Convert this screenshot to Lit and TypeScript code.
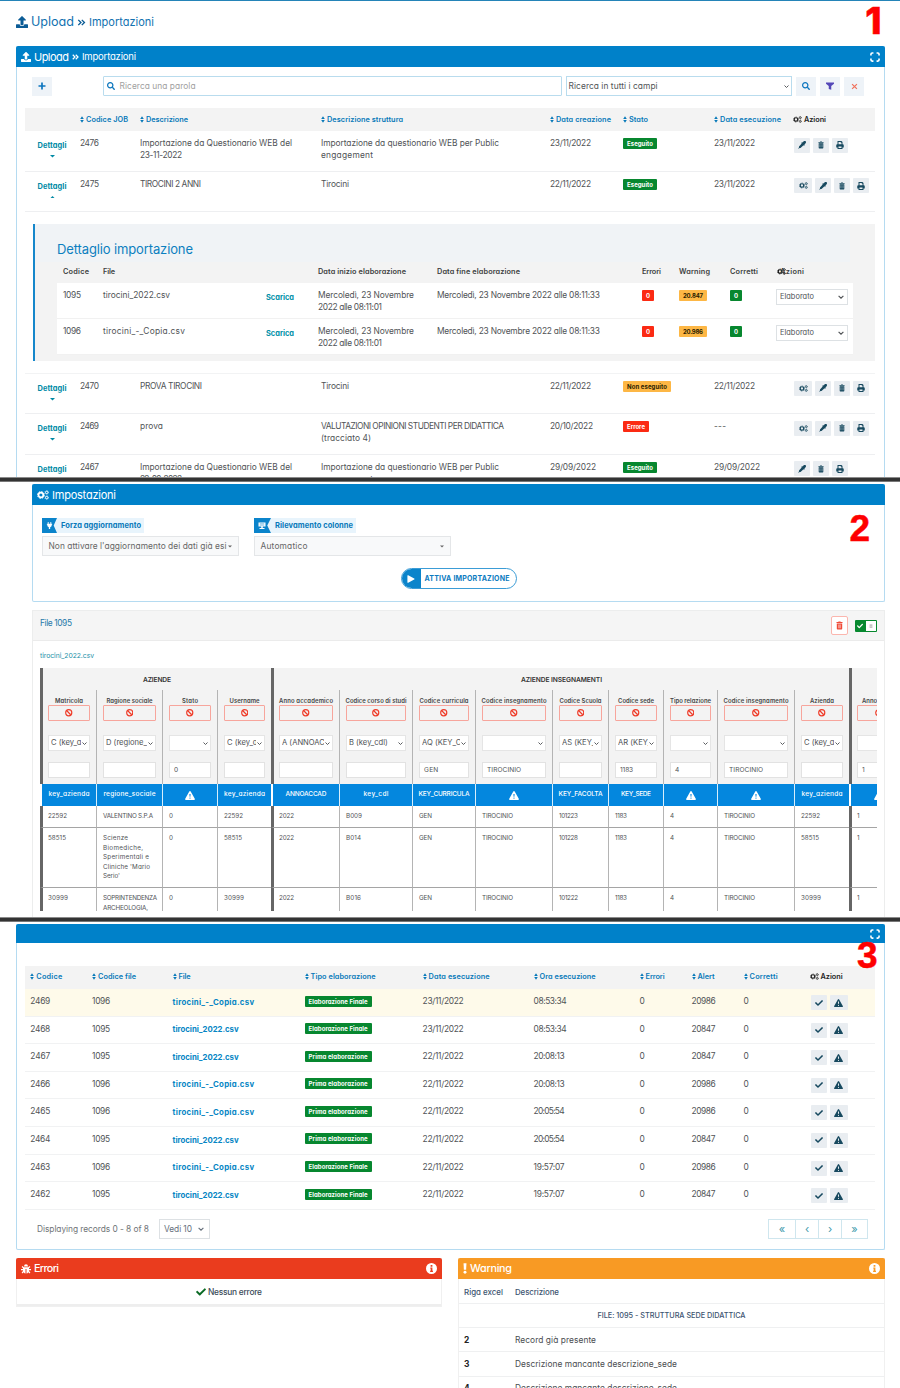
import { LitElement, html, css, svg, nothing } from "lit";
import { customElement, property } from "lit/decorators.js";
import { classMap } from "lit/directives/class-map.js";

/* ---------- icons ---------- */
const ICONS: Record<string, [string, any]> = {
  upload: ["0 0 512 512", svg`<path d="M296 384h-80c-13.300 0-24-10.700-24-24V192h-87.700c-17.800 0-26.700-21.500-14.100-34.100L242.300 5.700c7.500-7.500 19.800-7.500 27.300 0l152.200 152.200c12.600 12.600 3.700 34.100-14.100 34.100H320v168c0 13.300-10.700 24-24 24zm216-8v112c0 13.300-10.700 24-24 24H24c-13.300 0-24-10.700-24-24V376c0-13.300 10.700-24 24-24h136v8c0 30.900 25.100 56 56 56h80c30.900 0 56-25.100 56-56v-8h136c13.300 0 24 10.700 24 24z"/>`],
  search: ["0 0 512 512", svg`<path d="M505 442.700L405.300 343c-4.500-4.500-10.600-7-17-7H372c27.600-35.300 44-79.700 44-128C416 93.100 322.900 0 208 0S0 93.100 0 208s93.100 208 208 208c48.300 0 92.700-16.400 128-44v16.300c0 6.400 2.500 12.500 7 17l99.700 99.700c9.400 9.400 24.600 9.400 33.900 0l28.300-28.300c9.400-9.400 9.400-24.600.1-34zM208 336c-70.700 0-128-57.200-128-128 0-70.700 57.200-128 128-128 70.700 0 128 57.200 128 128 0 70.700-57.200 128-128 128z"/>`],
  check: ["0 0 512 512", svg`<path d="M173.900 439.400l-166.400-166.400c-10-10-10-26.200 0-36.200l36.200-36.200c10-10 26.200-10 36.200 0L192 312.700 432.100 72.600c10-10 26.200-10 36.200 0l36.200 36.200c10 10 10 26.200 0 36.200l-294.400 294.400c-10 10-26.200 10-36.200 0z"/>`],
  plus: ["0 0 16 16", svg`<path d="M6.300 1h3.400v5.300H15v3.400H9.700V15H6.300V9.700H1V6.300h5.300z"/>`],
  filter: ["0 0 16 16", svg`<path d="M0 1h16v2.500l-5.500 4.500v7.500L5.500 14V8L0 3.500z"/>`],
  times: ["0 0 16 16", svg`<path d="M2.500 2.500l11 11M13.500 2.500l-11 11" fill="none" stroke="currentColor" stroke-width="2.800"/>`],
  expand: ["0 0 16 16", svg`<path d="M1.500 5.500v-2q0-2 2-2h2M10.500 1.500h2q2 0 2 2v2M14.500 10.500v2q0 2-2 2h-2M5.500 14.500h-2q-2 0-2-2v-2" fill="none" stroke="currentColor" stroke-width="2.600"/>`],
  cogs: ["0 0 20 16", svg`<g fill="none" stroke="currentColor"><circle cx="6.500" cy="8" r="4" stroke-width="2.800"/><circle cx="6.500" cy="8" r="5.700" stroke-width="1.600" stroke-dasharray="2.500 1.977"/><circle cx="16.200" cy="3.700" r="2" stroke-width="1.600"/><circle cx="16.200" cy="3.700" r="3.100" stroke-width="1" stroke-dasharray="1.600 1.646"/><circle cx="16.200" cy="12.300" r="2" stroke-width="1.600"/><circle cx="16.200" cy="12.300" r="3.100" stroke-width="1" stroke-dasharray="1.600 1.646"/></g>`],
  dropper: ["0 0 16 16", svg`<path d="M15.300.7c1 1 1 2.800 0 3.800L12.800 7l.9 1-1.700 1.700-1-1L5 14.200H3l-1.500 1.300-1-1L2 13v-2l5.400-6-1-1L8 2.300l1 .9L11.500.7c1-1 2.800-1 3.800 0z"/>`],
  trash: ["0 0 14 16", svg`<path fill-rule="evenodd" d="M1 1.200h3.500L5 0h4l.5 1.200H13V3H1zM1.600 3.800h10.800V14.500q0 1.500-1.500 1.500H3.100q-1.500 0-1.500-1.500zM4 6v7.500h.8V6zM6.600 6v7.500h.8V6zM9.200 6v7.500h.8V6z"/>`],
  print: ["0 0 16 16", svg`<path fill-rule="evenodd" d="M3 0h8l2 2v4.500h.5q2 0 2 2V13H13v3H3v-3H.500V8.500q0-2 2-2H3zM5 2v4.500h6V3.500H9.500V2zM5 11v3h6v-3z"/>`],
  ban: ["0 0 16 16", svg`<circle cx="8" cy="8" r="6.500" fill="none" stroke="currentColor" stroke-width="2.500"/><path d="M3.800 3.800l8.400 8.400" stroke="currentColor" stroke-width="2.500"/>`],
  warn: ["0 0 18 16", svg`<path fill-rule="evenodd" d="M9 0q.8 0 1.300.8l7.300 13q.7 2.200-1.200 2.200H1.600Q-.3 16 .4 13.800L7.700.8Q8.200 0 9 0zM7.900 5.200l.4 5h1.400l.4-5zM9 11.400a1.200 1.200 0 100 2.400 1.200 1.200 0 000-2.400z"/>`],
  sort: ["0 0 8 14", svg`<path d="M4 0.500l3.600 5.300H.4zM4 13.500L.4 8.200h7.200z"/>`],
  chevron: ["0 0 10 6", svg`<path d="M1 1l4 4 4-4" fill="none" stroke="currentColor" stroke-width="1.900"/>`],
  down: ["0 0 8 4", svg`<path d="M0 0h8L4 4z"/>`],
  up: ["0 0 8 4", svg`<path d="M0 4h8L4 0z"/>`],
  plug: ["0 0 16 16", svg`<path d="M4 0h2v4h4V0h2v4h2v2.500h-1V8q0 3-3.500 4v4h-3v-4Q3 11 3 8V6.500H2V4h2z"/>`],
  sign: ["0 0 16 16", svg`<path d="M1 1h14v8H1zM6.500 9h3v3H13v2H3v-2h3.500z"/><path d="M3.500 3.500h9M3.500 6.200h9" stroke="#0b84cb" stroke-width="1"/>`],
  play: ["0 0 10 10", svg`<path d="M.5 1q0-1.200 1-.6l7.500 4q.9.600 0 1.200l-7.500 4q-1 .6-1-.6z"/>`],
  bug: ["0 0 16 16", svg`<path fill-rule="evenodd" d="M4.700 3.800Q5 .2 8 .2t3.300 3.600zM0 8h3.200V6.600L1 4.600l1.300-1.300L4.600 5h6.800l2.300-1.700L15 4.600l-2.200 2V8H16v2h-3.200v1.300l2.200 2.400-1.300 1.300-2-2q-1.100 2-2.900 2.300V8H7.200v7.300Q5.300 15 4.300 13l-2 2L1 13.700l2.200-2.400V10H0z"/>`],
  info: ["0 0 16 16", svg`<path fill-rule="evenodd" d="M8 0a8 8 0 100 16A8 8 0 008 0zM6.700 2.800h2.600v2.500H6.700zM6.300 6.600h3v4.800h.8V13H6v-1.600h.8V8.200h-.5z"/>`],
  bang: ["0 0 6 16", svg`<path d="M.8 0h4.400l-.5 10H1.300z"/><circle cx="3" cy="13.600" r="2.200"/>`],
  angles: ["0 0 14 12", svg`<path d="M1.500 1.500L6 6l-4.500 4.500M7.500 1.500L12 6l-4.500 4.500" fill="none" stroke="currentColor" stroke-width="2.400"/>`],
};
const icon = (name: string, w = 8, h = w) => svg`<svg class="ic" width=${w} height=${h} viewBox=${ICONS[name][0]} fill="currentColor">${ICONS[name][1]}</svg>`;

/* A single line of text whose tracking is computed so that it spans w pixels. */
@customElement("fit-text")
class FitText extends LitElement {
  @property({ type: Number }) w = 0;
  static styles = css`
    :host { display: inline-block; white-space: pre; }
    span { display: inline-block; }
  `;
  render() { return html`<span><slot></slot></span>`; }
  firstUpdated() {
    const s = this.renderRoot.querySelector("span") as HTMLElement;
    const n = (this.textContent || "").length;
    if (!this.w || n < 2) return;
    const natural = s.getBoundingClientRect().width;
    s.style.letterSpacing = `${(this.w - natural) / (n - 1)}px`;
    s.style.marginRight = `${-(this.w - natural) / (n - 1)}px`;
  }
}
const fit = (t: string, w = 0) => html`<fit-text .w=${w}>${t}</fit-text>`;
const lines = (l: [string, number][]) => l.map(([t, w]) => html`<div>${fit(t, w)}</div>`);

/* ---------- data ---------- */
type L = [string, number][];
interface Job { code: string; open?: boolean; desc: L; org: L; made: string; state: [string, string, number]; run: string; cogs: boolean }
const WEB = (d: string): L => [["Importazione da Questionario WEB del", 152], [d, 42]];
const PUB: L = [["Importazione da questionario WEB per Public", 178], ["engagement", 52]];
const JOBS: Job[] = [
  { code: "2476", desc: WEB("23-11-2022"), org: PUB, made: "23/11/2022", state: ["Eseguito", "ok", 26], run: "23/11/2022", cogs: false },
  { code: "2475", open: true, desc: [["TIROCINI 2 ANNI", 61]], org: [["Tirocini", 28]], made: "22/11/2022", state: ["Eseguito", "ok", 26], run: "23/11/2022", cogs: true },
  { code: "2470", desc: [["PROVA TIROCINI", 62]], org: [["Tirocini", 28]], made: "22/11/2022", state: ["Non eseguito", "mid", 40], run: "22/11/2022", cogs: true },
  { code: "2469", desc: [["prova", 23]], org: [["VALUTAZIONI OPINIONI STUDENTI PER DIDATTICA", 183], ["(tracciato 4)", 50]], made: "20/10/2022", state: ["Errore", "bad", 18], run: "---", cogs: true },
  { code: "2467", desc: WEB("22-09-2022"), org: PUB, made: "29/09/2022", state: ["Eseguito", "ok", 26], run: "29/09/2022", cogs: false },
];
const dateW = (d: string) => (d === "---" ? 12 : d.startsWith("29") ? 46 : d.startsWith("20") ? 43 : 41);

interface Col { x: number; thick?: boolean; label: string; lw: number; sel: string; val: string; key: string; kw: number; d: string[] }
const col = (x: number, label: string, lw: number, sel: string, val: string, key: string, kw: number, d: string[], thick = false): Col => ({ x, label, lw, sel, val, key, kw, d, thick });
const COLS: Col[] = [
  col(40, "Matricola", 28, "C (key_azienda)", "", "key_azienda", 41, ["22592", "58515", "30999"], true),
  col(96, "Ragione sociale", 46, "D (regione_sociale)", "", "regione_sociale", 52, ["VALENTINO S.P.A", "Scienze|Biomediche,|Sperimentali e|Cliniche 'Mario|Serio'", "SOPRINTENDENZA|ARCHEOLOGIA,"]),
  col(162, "Stato", 16, " ", "0", "", 0, ["0", "0", "0"]),
  col(217, "Username", 30, "C (key_azienda)", "", "key_azienda", 41, ["22592", "58515", "30999"]),
  col(271, "Anno accademico", 54, "A (ANNOACCAD)", "", "ANNOACCAD", 41, ["2022", "2022", "2022"], true),
  col(339, "Codice corso di studi", 61, "B (key_cdl)", "", "key_cdl", 25, ["B009", "B014", "B016"]),
  col(412, "Codice curricula", 49, "AQ (KEY_CURRICULA)", "GEN", "KEY_CURRICULA", 51, ["GEN", "GEN", "GEN"]),
  col(475, "Codice insegnamento", 65, " ", "TIROCINIO", "", 0, ["TIROCINIO", "TIROCINIO", "TIROCINIO"]),
  col(552, "Codice Scuola", 42, "AS (KEY_FACOLTA)", "", "KEY_FACOLTA", 44, ["101223", "101228", "101222"]),
  col(608, "Codice sede", 36, "AR (KEY_SEDE)", "1183", "KEY_SEDE", 30, ["1183", "1183", "1183"]),
  col(663, "Tipo relazione", 41, " ", "4", "", 0, ["4", "4", "4"]),
  col(717, "Codice insegnamento", 65, " ", "TIROCINIO", "", 0, ["TIROCINIO", "TIROCINIO", "TIROCINIO"]),
  col(794, "Azienda", 24, "C (key_azienda)", "", "key_azienda", 41, ["22592", "58515", "30999"]),
  col(849, "Anno corso", 33, " ", "1", "", 0, ["1", "1", "1"], true),
];
const COL_END = 906;
const dataW: Record<string, number> = { "VALENTINO S.P.A": 50, "Scienze": 25, "Biomediche,": 40, "Sperimentali e": 46, "Cliniche 'Mario": 47, "Serio'": 17, "SOPRINTENDENZA": 54, "ARCHEOLOGIA,": 45, "22592": 19, "58515": 18, "30999": 20, "2022": 15, "B009": 16, "B014": 15, "B016": 15, GEN: 13, TIROCINIO: 31, "101223": 19, "101228": 19, "101222": 19, "1183": 12 };

const COPIA: [string, number] = ["tirocini_-_Copia.csv", 81.500];
const PLAIN: [string, number] = ["tirocini_2022.csv", 66];
const RUNS: [string, string, [string, number], string, string, string, string][] = [
  ["2469", "1096", COPIA, "Elaborazione Finale", "23/11/2022", "08:53:34", "20986"],
  ["2468", "1095", PLAIN, "Elaborazione Finale", "23/11/2022", "08:53:34", "20847"],
  ["2467", "1095", PLAIN, "Prima elaborazione", "22/11/2022", "20:08:13", "20847"],
  ["2466", "1096", COPIA, "Prima elaborazione", "22/11/2022", "20:08:13", "20986"],
  ["2465", "1096", COPIA, "Prima elaborazione", "22/11/2022", "20:05:54", "20986"],
  ["2464", "1095", PLAIN, "Prima elaborazione", "22/11/2022", "20:05:54", "20847"],
  ["2463", "1096", COPIA, "Elaborazione Finale", "22/11/2022", "19:57:07", "20986"],
  ["2462", "1095", PLAIN, "Elaborazione Finale", "22/11/2022", "19:57:07", "20847"],
];

const th = (t: string, w: number) => html`<div class="th">${icon("sort", 4, 7)}${fit(t, w)}</div>`;

@customElement("app-root")
class AppRoot extends LitElement {
  static styles = css`
    :host { display: block; width: 900px; height: 1388px; overflow: hidden; background: #fff;
      font: 400 8.400px/12px Inter, "Noto Sans", sans-serif; font-feature-settings: "cv11"; color: #505356; }
    * { box-sizing: border-box; }
    .ic { display: block; flex: none; }
    .sec { position: relative; overflow: hidden; }
    .s1 { height: 477px; border-top: 1px solid #2484b8; }
    .s2 { height: 435px; padding: 2px 15px 0 32px; }
    .s3 { height: 466px; padding: 2px 15px 0 16px; }
    .rule { height: 5px; background: #333; border-top: 1px solid #8b8b8b; border-bottom: 1px solid #777; }
    .num { position: absolute; font: 700 37px/37px "Liberation Sans", Arial, sans-serif; color: #fe0000; -webkit-text-stroke: .5px #fe0000; }
    .n1 { right: 18.500px; top: 1px; font-family: Inter, sans-serif; font-weight: 800; }
    .n2 { right: 30px; top: 28px; }
    .n3 { right: 22.500px; top: 15px; }

    .crumb { display: flex; align-items: center; gap: 3px; height: 20px; margin: 11px 0 0 16px; color: #1272b0; font-size: 12.600px; }
    .crumb .sub { font-size: 11px; }
    .crumb .ic { color: #0b5c96; }
    .panel { border: 1px solid #b5dbf1; border-top: 0; border-radius: 2px; background: #fff; }
    .s1 .panel { margin: 14px 15px 0 16px; height: 500px; }
    .bar { display: flex; align-items: center; gap: 3px; height: 21px; margin: 0 -1px; padding: 0 5px; background: #0081c9; color: #fff; font-size: 11px; border-radius: 2px 2px 0 0; }
    .bar .sub { font-size: 9.500px; }
    .bar .end { margin-left: auto; }
    .tools { display: flex; align-items: center; height: 20px; margin: 9px 20px 0 15px; gap: 4px; }
    .tb { display: grid; place-items: center; width: 20px; height: 19px; background: #eef3f8; color: #0d76bf; }
    .tb.f { color: #5448b8; } .tb.x { color: #f0725d; }
    .search { display: flex; align-items: center; gap: 5px; width: 460px; height: 20px; margin-left: 46.600px; padding-left: 3px; border: 1px solid #b9dcee; color: #a0a0a0; border-radius: 1px; }
    .search .ic { color: #0b76bd; }
    .sel { display: flex; align-items: center; justify-content: space-between; border: 1px solid #dde1e4; background: #fff; white-space: nowrap; overflow: hidden; }
    .tools .sel { width: 227px; height: 20px; border-color: #b9dcee; padding: 0 2px; }
    .row { display: grid; grid-template-columns: 55px 60px 181px 229px 73px 91px 79px 1fr; margin: 0 9px 0 8px; height: 40.500px; border-bottom: 1px solid #eeeff1; padding-top: 6px; }
    .row.head { height: 23px; margin-top: 12px; align-items: center; padding: 0; border: 0; background: #f3f3f3; }
    .th { display: flex; align-items: center; gap: 2px; color: #0779b9; font-weight: 600; font-size: 7.300px; }
    .th.k { color: #222; }
    .row.top { border-top: 1px solid #f2f3f4; height: 41px; margin-top: 12px; }
    .det { display: flex; flex-direction: column; align-items: center; gap: 3px; width: 30px; margin-left: 12px; padding-top: 3px; color: #008aa5; font-weight: 700; font-size: 7.400px; }
    .badge { display: inline-flex; align-items: center; justify-content: center; height: 11px; padding: 0 4px; font-size: 6px; line-height: 9px; font-weight: 700; color: #fff; border-radius: 1px; vertical-align: top; }
    .row .badge { margin-top: 1px; }
    .ok { background: #07872f; } .mid { background: #fdb745; color: #2b1d00; } .bad { background: #fb2a13; }
    .acts { display: flex; gap: 3px; margin: .5px 0 0 1px; }
    .ab { display: grid; place-items: center; width: 16px; height: 15px; background: #e9edf1; color: #17495f; border-radius: 1px; }
    .ab.w { width: 18px; }

    .detail { margin: 12px 9px 0 16px; height: 137px; background: linear-gradient(90deg, #f0f3f6 0 97%, #f3f3f3 97%) top / 100% 38px no-repeat #f3f3f3; border-left: 2px solid #1687cb; padding: 17px 22px 0 22px; }
    .detail h2 { margin: 0; font: 400 13px/16px Inter, sans-serif; color: #0c7fc0; }
    .dr { display: grid; grid-template-columns: 40px 163px 52px 119px 205px 37px 51px 47px 1fr; padding: 6px 0 0 6px; height: 36px; background: #fff; border-bottom: 1px solid #f1f1f1; }
    .dr.h { height: 26px; padding-top: 8.600px; background: none; border: 0; font-size: 7.300px; font-weight: 600; color: #3b3e40; }
    .dr .sel { width: 72px; height: 16px; padding: 0 3px; font-size: 7.400px; margin-left: -1px; }
    .dr.h .az { display: flex; align-items: center; height: 12px; }
    .dr.h .az .ic { margin-right: -6px; color: #111; }
    .dr .badge { margin-top: 1px; }
    .scar { color: #0090a8; font-weight: 700; font-size: 7.400px; padding-top: 2.500px; }

    .s2 .panel { height: 118px; }
    .opts { display: flex; gap: 15px; padding: 13px 0 0 9px; }
    .opt { width: 197px; }
    .tag { display: flex; width: max-content; height: 15px; align-items: center; background: #e8f4fc; color: #0879ba; font-weight: 700; font-size: 7.500px; padding-right: 3px; }
    .tag i { display: grid; place-items: center start; padding-left: 4px; width: 15px; height: 15px; margin-right: 4px; background: #0b84cb; color: #fff; clip-path: polygon(0 0, 100% 0, 78% 50%, 100% 100%, 0 100%); }
    .tag i.wd { width: 17px; }
    .opt .sel { height: 20px; margin-top: 3px; padding: 0 6px 0 5.500px; background: #f8f9fa; border-color: #e4e6e8; color: #666; }
    .go { display: flex; align-items: center; width: 116px; height: 21px; margin: 12px 0 0 367.500px; border: 1px solid #3b9cd6; border-radius: 11px; overflow: hidden; color: #0b7bc0; font-weight: 700; font-size: 7px; }
    .go i { display: grid; place-items: center; width: 19px; height: 21px; margin-right: 4px; background: #0b84cb; color: #fff; }
    .file { height: 320px; margin-top: 8px; border: 1px solid #eceded; }
    .fh { display: flex; align-items: center; height: 30px; padding: 0 7px; background: #f5f5f5; border-bottom: 1px solid #ebebeb; color: #2579a9; }
    .fh > fit-text { padding-bottom: 6px; }
    .fh .del { display: grid; place-items: center; width: 17px; height: 19px; margin-left: auto; border: 1px solid #fbb6ae; background: #fff; color: #f04a37; border-radius: 2px; }
    .sw { display: flex; align-items: center; width: 22px; height: 12px; margin-left: 7px; padding: 1px 1px 1px 2px; background: #07892f; color: #fff; gap: 1px; border-radius: 1px; }
    .sw b { display: grid; place-items: center; width: 10px; height: 10px; background: #fff; color: #bbb; margin-left: auto; }
    .fn { height: 12px; margin: 9px 0 6px 7px; color: #1a8fa8; font-size: 6.800px; }
    .scroll { width: 837px; height: 243px; margin-left: 7px; overflow: hidden; font-size: 6.300px; line-height: 9.600px; }
    .grid { display: grid; width: 866px; }
    .g { background: #f3f3f3; height: 22px; text-align: center; line-height: 24px; font-weight: 600; font-size: 6.700px; color: #333; }
    .c { border-left: 1px solid #b4b4b4; padding: 0 6px; min-width: 0; }
    .thick { border-left: 3px solid #666; }
    .c.thick { padding-left: 5px; }
    .c.f { height: 94px; background: #f3f3f3; padding-top: 6px; }
    .lab { height: 9px; display: flex; justify-content: center; font-weight: 600; font-size: 5.900px; color: #444; white-space: nowrap; }
    .ban { display: grid; place-items: center; height: 16px; border: 1px solid #f7a59c; color: #ef3b28; border-radius: 1px; }
    .c .sel { height: 16px; margin-top: 14px; padding: 0 2px; font-size: 7.600px; border-color: #e5e5e5; gap: 1px; }
    .c .sel span { overflow: hidden; flex: 1; min-width: 0; }
    .inp { height: 16px; margin-top: 11px; border: 1px solid #e2e2e2; background: #fff; padding: 2.500px 4px; font-size: 6.600px; }
    .c.k { display: grid; place-items: center; height: 22px; padding: 0; background: #0487de; border-color: #d7eefc; border-left-width: 1px; color: #fff; font-weight: 500; font-size: 6.500px; }
    .c.k.thick { border-left: 2px solid #fff; margin-left: 0; }
    .c.d { border-bottom: 1px solid #a5a5a5; padding-top: 6px; }
    .d0 { height: 22px; } .d1 { height: 60px; } .d2 { height: 40px; }

    .s3 .panel { height: 326px; }
    .s3 .panel .bar { height: 19px; }
    .rr { display: grid; grid-template-columns: 61.800px 80.500px 132px 118px 111px 106px 52px 52px 66px 1fr; margin: 0 9px 0 8px; padding: 6px 0 0 5.300px; height: 27.600px; border-bottom: 1px solid #f1f2f3; }
    .rr.head { height: 23px; margin-top: 23px; padding-top: 0; align-items: center; background: #f3f3f3; border: 0; }
    .rr.head .th { margin-top: -1.500px; }
    .rr.hl { background: #fefaea; }
    .rr .acts { margin: 0 0 0 1px; }
    .rr .badge { margin-top: .5px; width: 67px; padding: 0; }
    .link { color: #0585c4; font-weight: 700; font-size: 7.800px; padding-top: .7px; }
    .foot { display: flex; align-items: center; height: 20px; margin: 9px 16px 0 20px; color: #707477; }
    .foot .sel { width: 51px; height: 20px; margin-left: 10px; padding: 0 5px 0 4px; color: #66707c; }
    .pager { display: flex; margin-left: auto; border: 1px solid #cfe6ee; height: 20px; color: #3f9bac; }
    .pager span { display: grid; place-items: center; width: 23px; border-left: 1px solid #cfe6ee; font-size: 11px; line-height: 18px; padding-bottom: 2px; }
    .pager span:first-child { border: 0; } .pager .wd { width: 26px; }
    .cards { display: flex; align-items: flex-start; gap: 16px; margin-top: 8px; }
    .card { width: 426px; border: 1px solid #f0f0f0; border-top: 0; }
    .card.w { width: 427px; }
    .card .bar { font-size: 10.800px; font-weight: 500; }
    .bar.red { background: #ea3c1e; } .bar.or { background: #f89a24; }
    .none { display: flex; justify-content: center; align-items: center; gap: 2px; height: 27px; font-weight: 500; color: #3a4a58; border-bottom: 2px solid #eee; }
    .none .ic { color: #0a6a24; }
    .wr { display: grid; grid-template-columns: 51px 1fr; align-items: center; height: 24.200px; border-bottom: 1px solid #eff0f1; padding-left: 5px; color: #4a4d50; }
    .wr.h { font-size: 7.900px; font-weight: 500; color: #3c5470; height: 25px; padding-top: 1px; }
    .wr.one { display: flex; justify-content: center; font-size: 7.300px; font-weight: 500; color: #3c5470; padding: 0; }
    .wr b { color: #222; }
  `;

  private job(j: Job, top = false) {
    return html`<div class=${classMap({ row: true, top })}>
      <div class="det">${fit("Dettagli", 29)}${icon(j.open ? "up" : "down", 5, 2.5)}</div>
      <div>${fit(j.code, 19)}</div>
      <div>${lines(j.desc)}</div><div>${lines(j.org)}</div>
      <div>${fit(j.made, dateW(j.made))}</div>
      <div><span class="badge ${j.state[1]}">${fit(j.state[0], j.state[2])}</span></div>
      <div>${fit(j.run, dateW(j.run))}</div>
      <div class="acts">${j.cogs ? html`<span class="ab w">${icon("cogs", 9, 7)}</span>` : nothing}
        <span class="ab">${icon("dropper", 8)}</span><span class="ab">${icon("trash", 6, 8)}</span><span class="ab">${icon("print", 8)}</span></div>
    </div>`;
  }

  private detailRow(code: string, file: string, fw: number, warn: string) {
    return html`<div class="dr"><div>${fit(code, 18)}</div><div>${fit(file, fw)}</div><div class="scar">${fit("Scarica", 28)}</div>
      <div>${lines([["Mercoledì, 23 Novembre", 96], ["2022 alle 08:11:01", 64]])}</div>
      <div>${fit("Mercoledì, 23 Novembre 2022 alle 08:11:33", 163)}</div>
      <div><span class="badge bad">0</span></div><div><span class="badge mid">${fit(warn, 20)}</span></div><div><span class="badge ok">0</span></div>
      <div><div class="sel">${fit("Elaborato", 34)}${icon("chevron", 6, 4)}</div></div></div>`;
  }

  private sheet() {
    const tracks = COLS.map((c, i) => (i + 1 < COLS.length ? COLS[i + 1].x : COL_END) - c.x + "px").join(" ");
    const cls = (c: Col, k: string) => `c ${k} ${c.thick ? "thick" : ""}`;
    return html`<div class="scroll"><div class="grid" style="grid-template-columns:${tracks}">
      <div class="g thick" style="grid-column:span 4">${fit("AZIENDE", 28)}</div>
      <div class="g thick" style="grid-column:span 9">${fit("AZIENDE INSEGNAMENTI", 81)}</div>
      <div class="g thick"></div>
      ${COLS.map(c => html`<div class=${cls(c, "f")}><div class="lab">${fit(c.label, c.lw)}</div>
        <div class="ban">${icon("ban", 7.5)}</div>
        <div class="sel"><span>${c.sel}</span>${icon("chevron", 5, 3)}</div>
        <div class="inp">${fit(c.val, dataW[c.val] ? dataW[c.val] * 1.1 : 0)}</div></div>`)}
      ${COLS.map(c => html`<div class=${cls(c, "k")}>${c.key ? fit(c.key, c.kw) : icon("warn", 10, 9)}</div>`)}
      ${[0, 1, 2].map(r => COLS.map(c => html`<div class=${cls(c, "d d" + r)}>${lines(c.d[r].split("|").map(t => [t, dataW[t] || 0] as [string, number]))}</div>`))}
    </div></div>`;
  }

  render() {
    return html`
      <section class="sec s1">
        <div class="crumb">${icon("upload", 12)}${fit("Upload", 43)}${icon("angles", 9, 7)}<span class="sub">${fit("Importazioni", 65)}</span></div>
        <div class="panel">
          <div class="bar">${icon("upload", 10)}${fit("Upload", 35)}${icon("angles", 7, 6)}<span class="sub">${fit("Importazioni", 54)}</span><span class="end">${icon("expand", 10)}</span></div>
          <div class="tools"><span class="tb">${icon("plus", 8)}</span>
            <div class="search">${icon("search", 8)}${fit("Ricerca una parola", 76)}</div>
            <div class="sel">${fit("Ricerca in tutti i campi", 89)}${icon("chevron", 5, 3)}</div>
            <span class="tb">${icon("search", 8)}</span><span class="tb f">${icon("filter", 8)}</span><span class="tb x">${icon("times", 7)}</span></div>
          <div class="row head"><div></div>${th("Codice JOB", 42)}${th("Descrizione", 42)}${th("Descrizione struttura", 76)}${th("Data creazione", 55)}${th("Stato", 19)}${th("Data esecuzione", 61)}<div class="th k">${icon("cogs", 9, 7)}${fit("Azioni", 22)}</div></div>
          ${JOBS.slice(0, 2).map(j => this.job(j))}
          <div class="detail"><h2>${fit("Dettaglio importazione", 136)}</h2>
            <div class="dr h"><div>${fit("Codice", 26)}</div><div>${fit("File", 12)}</div><div></div><div>${fit("Data inizio elaborazione", 88)}</div><div>${fit("Data fine elaborazione", 83)}</div><div>${fit("Errori", 19)}</div><div>${fit("Warning", 31)}</div><div>${fit("Corretti", 28)}</div><div class="az">${icon("cogs", 9, 7)}${fit("Azioni", 24)}</div></div>
            ${this.detailRow("1095", "tirocini_2022.csv", 67, "20.847")}${this.detailRow("1096", "tirocini_-_Copia.csv", 82, "20.986")}
          </div>
          ${JOBS.slice(2).map((j, i) => this.job(j, i === 0))}
        </div>
        <div class="num n1">1</div>
      </section>
      <div class="rule"></div>
      <section class="sec s2">
        <div class="panel">
          <div class="bar">${icon("cogs", 12, 10)}${fit("Impostazioni", 64)}</div>
          <div class="opts">
            <div class="opt"><div class="tag"><i>${icon("plug", 7)}</i>${fit("Forza aggiornamento", 80)}</div><div class="sel">${fit("Non attivare l'aggiornamento dei dati già esi", 178)}${icon("down", 4, 3)}</div></div>
            <div class="opt"><div class="tag"><i class="wd">${icon("sign", 8)}</i>${fit("Rilevamento colonne", 78)}</div><div class="sel">${fit("Automatico", 47)}${icon("down", 4, 3)}</div></div>
          </div>
          <div class="go"><i>${icon("play", 8)}</i>${fit("ATTIVA IMPORTAZIONE", 85)}</div>
        </div>
        <div class="file">
          <div class="fh">${fit("File 1095", 32)}<span class="del">${icon("trash", 7, 9)}</span><span class="sw">${icon("check", 6)}<b>${icon("trash", 4, 4)}</b></span></div>
          <div class="fn">${fit("tirocini_2022.csv", 54)}</div>
          ${this.sheet()}
        </div>
        <div class="num n2">2</div>
      </section>
      <div class="rule"></div>
      <section class="sec s3">
        <div class="panel">
          <div class="bar"><span class="end">${icon("expand", 10)}</span></div>
          <div class="rr head">${th("Codice", 26)}${th("Codice file", 38)}${th("File", 12)}${th("Tipo elaborazione", 65)}${th("Data esecuzione", 61)}${th("Ora esecuzione", 56)}${th("Errori", 19)}${th("Alert", 17)}${th("Corretti", 28)}<div class="th k">${icon("cogs", 9, 7)}${fit("Azioni", 22)}</div></div>
          ${RUNS.map((r, i) => html`<div class=${classMap({ rr: true, hl: i === 0 })}>
            <div>${fit(r[0], 20)}</div><div>${fit(r[1], 18)}</div><div class="link">${fit(...r[2])}</div>
            <div><span class="badge ok">${fit(r[3], 59)}</span></div>
            <div>${fit(r[4], 41)}</div><div>${fit(r[5], r[5][0] === "0" ? 33 : 31)}</div><div>0</div><div>${fit(r[6], 24)}</div><div>0</div>
            <div class="acts"><span class="ab">${icon("check", 8)}</span><span class="ab w">${icon("warn", 9, 8)}</span></div></div>`)}
          <div class="foot">${fit("Displaying records 0 - 8 of 8", 112)}<div class="sel">${fit("Vedi 10", 28)}${icon("chevron", 6, 4)}</div>
            <div class="pager"><span class="wd">«</span><span>‹</span><span>›</span><span class="wd">»</span></div></div>
        </div>
        <div class="cards">
          <div class="card"><div class="bar red">${icon("bug", 10)}${fit("Errori", 25)}<span class="end">${icon("info", 11)}</span></div><div class="none">${icon("check", 10)}${fit("Nessun errore", 54)}</div></div>
          <div class="card w"><div class="bar or">${icon("bang", 4, 11)}${fit("Warning", 42)}<span class="end">${icon("info", 11)}</span></div>
            <div class="wr h">${fit("Riga excel", 39)}${fit("Descrizione", 44)}</div>
            <div class="wr one">${fit("FILE: 1095 - STRUTTURA SEDE DIDATTICA", 148)}</div>
            <div class="wr"><b>2</b>${fit("Record già presente", 81)}</div>
            <div class="wr"><b>3</b>${fit("Descrizione mancante descrizione_sede", 162)}</div>
            <div class="wr"><b>4</b>${fit("Descrizione mancante descrizione_sede", 162)}</div>
          </div>
        </div>
        <div class="num n3">3</div>
      </section>`;
  }
}
